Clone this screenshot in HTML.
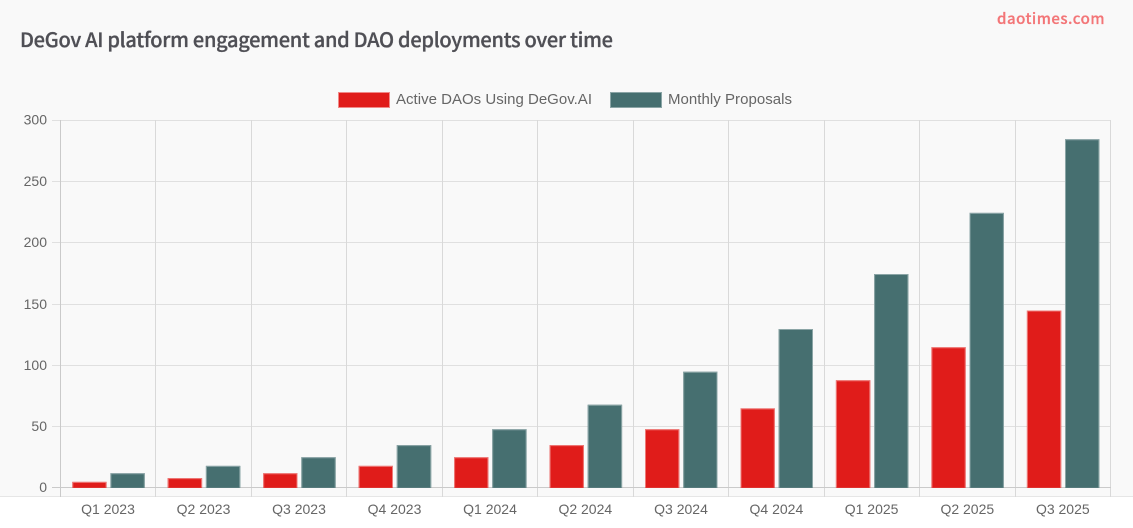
<!DOCTYPE html>
<html><head><meta charset="utf-8">
<style>
html,body{margin:0;padding:0;background:#fff;width:1133px;height:528px;overflow:hidden}
svg{display:block}
text{font-family:"Liberation Sans",Arial,sans-serif}
</style></head><body>
<svg id="c" width="1133" height="528" viewBox="0 0 1133 528" xmlns="http://www.w3.org/2000/svg">
<rect width="1133" height="496" fill="#f9f9f9"/>
<rect y="496" width="1133" height="1" fill="#e6e6e6"/>
<text x="20" y="47" font-size="20" fill="#4f4f55" stroke="#4f4f55" stroke-width="0.3" style="font-family:'Noto Sans CJK SC','Liberation Sans',sans-serif;font-weight:500" textLength="593" lengthAdjust="spacing">DeGov AI platform engagement and DAO deployments over time</text>
<text x="997" y="24" font-size="15" fill="#f37577" stroke="#f37577" stroke-width="0.25" style="font-family:'Noto Sans CJK SC','Liberation Sans',sans-serif;font-weight:500" textLength="107.5" lengthAdjust="spacing">daotimes.com</text>

<rect x="338.5" y="92" width="51" height="16" fill="#e01c1a"/>
<path d="M338.5 107.5H389.5M338.5 92.5H389.5M338.5 92V108M389.5 92V108" stroke="#f08a88" stroke-width="1" fill="none"/>
<text x="396" y="104" font-size="15" fill="#666" textLength="196" lengthAdjust="spacing">Active DAOs Using DeGov.AI</text>
<rect x="610.5" y="92" width="51" height="16" fill="#466f70"/>
<path d="M610.5 107.5H661.5M610.5 92.5H661.5M610.5 92V108M661.5 92V108" stroke="#8ba5a6" stroke-width="1" fill="none"/>
<text x="668" y="104" font-size="15" fill="#666" textLength="124" lengthAdjust="spacing">Monthly Proposals</text>

<g stroke="#e0e0e0" stroke-width="1" fill="none">
<path d="M52 120.5H1111M52 181.5H1111M52 242.5H1111M52 304.5H1111M52 365.5H1111M52 426.5H1111"/>
</g>
<g stroke="#d9d9d9" stroke-width="1" fill="none">
<path d="M155.5 120V497M251.5 120V497M346.5 120V497M442.5 120V497M537.5 120V497M633.5 120V497M728.5 120V497M824.5 120V497M919.5 120V497M1015.5 120V497M1110.5 120V497"/>
</g>
<path d="M52 487.5H1111M60.5 120V497" stroke="#cacaca" stroke-width="1" fill="none"/>

<g fill="#666" font-size="14" text-anchor="end">
<text x="47" y="124.5">300</text><text x="47" y="186">250</text><text x="47" y="247">200</text><text x="47" y="309">150</text><text x="47" y="370">100</text><text x="47" y="431">50</text><text x="47" y="492">0</text>
</g>
<g fill="#666" font-size="14" text-anchor="middle">
<text x="108" y="514">Q1 2023</text><text x="203.5" y="514">Q2 2023</text><text x="299" y="514">Q3 2023</text><text x="394.5" y="514">Q4 2023</text><text x="490" y="514">Q1 2024</text><text x="585.3" y="514">Q2 2024</text><text x="681" y="514">Q3 2024</text><text x="776.4" y="514">Q4 2024</text><text x="871.6" y="514">Q1 2025</text><text x="967.3" y="514">Q2 2025</text><text x="1062.8" y="514">Q3 2025</text>
</g>

<!-- bars -->
<g transform="translate(0.3,0)">
<g>
<path d="M72 487.9V481.9H106.3V487.9Z" fill="#e01c1a"/>
<path d="M110.1 487.9V473.3H144.5V487.9Z" fill="#466f70"/>
<path d="M167.4 487.9V478.1H201.8V487.9Z" fill="#e01c1a"/>
<path d="M205.6 487.9V465.9H240V487.9Z" fill="#466f70"/>
<path d="M262.9 487.9V473.3H297.2V487.9Z" fill="#e01c1a"/>
<path d="M301 487.9V457.3H335.4V487.9Z" fill="#466f70"/>
<path d="M358.3 487.9V465.9H392.7V487.9Z" fill="#e01c1a"/>
<path d="M396.5 487.9V445.1H430.9V487.9Z" fill="#466f70"/>
<path d="M453.8 487.9V457.3H488.1V487.9Z" fill="#e01c1a"/>
<path d="M491.9 487.9V429.2H526.3V487.9Z" fill="#466f70"/>
<path d="M549.3 487.9V445.1H583.6V487.9Z" fill="#e01c1a"/>
<path d="M587.4 487.9V404.7H621.8V487.9Z" fill="#466f70"/>
<path d="M644.7 487.9V429.2H679V487.9Z" fill="#e01c1a"/>
<path d="M682.9 487.9V371.7H717.2V487.9Z" fill="#466f70"/>
<path d="M740.2 487.9V408.4H774.5V487.9Z" fill="#e01c1a"/>
<path d="M778.3 487.9V329H812.7V487.9Z" fill="#466f70"/>
<path d="M835.6 487.9V380.2H870V487.9Z" fill="#e01c1a"/>
<path d="M873.8 487.9V274H908.1V487.9Z" fill="#466f70"/>
<path d="M931.1 487.9V347.2H965.4V487.9Z" fill="#e01c1a"/>
<path d="M969.2 487.9V212.9H1003.6V487.9Z" fill="#466f70"/>
<path d="M1026.6 487.9V310.5H1060.9V487.9Z" fill="#e01c1a"/>
<path d="M1064.7 487.9V139.3H1099.1V487.9Z" fill="#466f70"/>
</g>
<g fill="none" stroke-width="1">
<path stroke="#ee7a78" d="M72.5 487.5V482.4H105.8V487.5M167.9 487.5V478.6H201.3V487.5M263.4 487.5V473.8H296.7V487.5M358.8 487.5V466.4H392.2V487.5M454.3 487.5V457.8H487.6V487.5M549.8 487.5V445.6H583.1V487.5M645.2 487.5V429.7H678.5V487.5M740.7 487.5V408.9H774V487.5M836.1 487.5V380.7H869.5V487.5M931.6 487.5V347.7H964.9V487.5M1027.1 487.5V311H1060.4V487.5"/>
<path stroke="#8ba5a6" d="M110.6 487.5V473.8H144V487.5M206.1 487.5V466.4H239.5V487.5M301.5 487.5V457.8H334.9V487.5M397 487.5V445.6H430.4V487.5M492.4 487.5V429.7H525.8V487.5M587.9 487.5V405.2H621.3V487.5M683.4 487.5V372.2H716.7V487.5M778.8 487.5V329.5H812.2V487.5M874.3 487.5V274.5H907.6V487.5M969.7 487.5V213.4H1003.1V487.5M1065.2 487.5V139.8H1098.6V487.5"/>
</g>
</g>
</svg>
</body></html>
